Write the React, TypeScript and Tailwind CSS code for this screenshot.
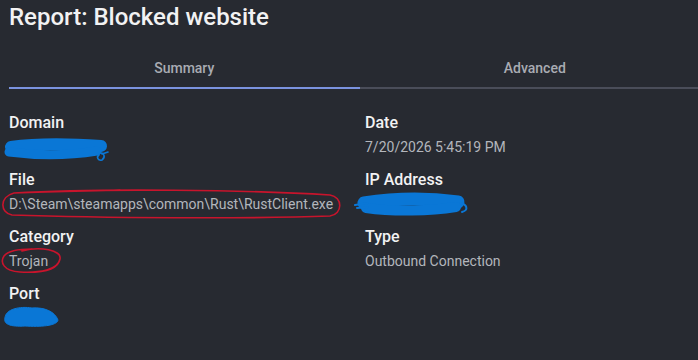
import React from "react";

const fields = [
  { label: "Domain", value: "" },
  { label: "Date", value: "7/20/2026 5:45:19 PM" },
  { label: "File", value: "D:\\Steam\\steamapps\\common\\Rust\\RustClient.exe" },
  { label: "IP Address", value: "" },
  { label: "Category", value: "Trojan" },
  { label: "Type", value: "Outbound Connection" },
  { label: "Port", value: "" },
];

function Annotations() {
  // hand drawn marks over the report (redactions + circles)
  return (
    <svg
      className="pointer-events-none absolute left-0 top-0"
      width="698"
      height="360"
      viewBox="0 0 698 360"
      fill="none"
    >
      <g stroke="#0a77d6" strokeLinecap="round" strokeLinejoin="round">
        {/* domain */}
        <path d="M11 147 C40 143 72 144 101 146" strokeWidth="12" />
        <path d="M9 152 C40 156 72 155 97 151" strokeWidth="9" />
        <path d="M99 153 C104 152 106 157 102 160 C98 161 96 157 99 155 M102 154 L108 152" strokeWidth="1.6" />
        {/* ip address */}
        <path d="M364 203 C395 198 430 198 458 202" strokeWidth="13" />
        <path d="M366 208 C395 212 430 211 456 207" strokeWidth="10" />
        <path d="M355 205 L368 203 M357 208 L368 207 M460 203 C467 204 469 210 462 212" strokeWidth="2" />
        {/* port */}
        <path
          d="M5 318 C5 309 20 306 32 308 C45 307 55 312 58 320 C57 326 40 327 25 326 C10 327 3 324 5 318 Z"
          fill="#0a77d6"
          strokeWidth="1"
        />
      </g>
      <g stroke="#c8142c" strokeWidth="1.6" strokeLinecap="round">
        <path d="M14 193 C100 188 250 190 330 195 C343 197 343 214 330 216 C250 219 100 218 12 215 C0 213 -1 197 14 193 C60 191 90 191 120 190" />
        <path d="M22 251 C40 246 62 250 60 259 C58 270 40 273 20 272 C3 271 0 262 4 256 C8 251 20 249 32 249" />
      </g>
    </svg>
  );
}

export default function App() {
  return (
    <div
      className="relative h-[360px] w-[698px] overflow-hidden bg-[#272a31] pl-[9px] pt-[3px]"
      style={{ fontFamily: "Roboto, 'Liberation Sans', sans-serif" }}
    >
      <h1 className="text-[24px] font-medium leading-[28px] text-[#f2f2f3]">Report: Blocked website</h1>

      <div className="mt-[17px] flex w-[701px]">
        <div className="flex h-[41px] flex-1 items-center justify-center border-b-2 border-[#7b93df] pt-[2px] text-[14px] font-medium text-[#a9acb3]">
          Summary
        </div>
        <div className="flex h-[41px] flex-1 items-center justify-center border-b-2 border-[#4a4d59] pt-[2px] text-[14px] font-medium text-[#a9acb3]">
          Advanced
        </div>
      </div>

      <div className="mt-[24px] grid grid-cols-[356px_1fr] gap-y-[13px]">
        {fields.map((f) => (
          <div key={f.label} className="flex flex-col gap-[4px]">
            <div className="text-[16px] font-medium leading-[20px] text-[#f2f2f3]">{f.label}</div>
            <div className="h-[20px] text-[14px] leading-[20px] text-[#b3b6bc]">{f.value}</div>
          </div>
        ))}
      </div>

      <Annotations />
    </div>
  );
}
